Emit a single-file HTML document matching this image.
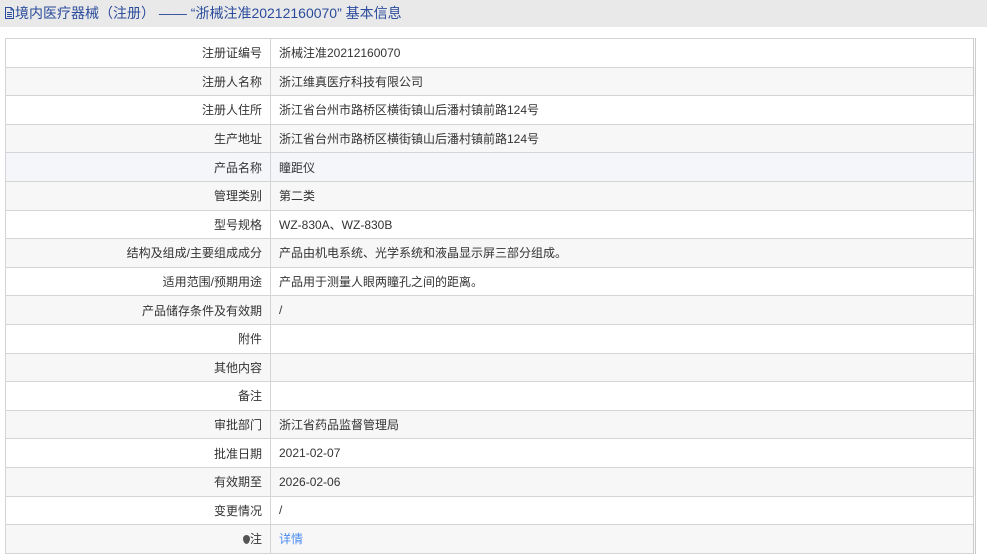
<!DOCTYPE html>
<html><head><meta charset="utf-8"><style>
body{margin:0;background:#fff;font-family:"Liberation Sans","Noto Sans CJK SC",sans-serif;font-size:12px;color:#333;width:987px;height:560px;overflow:hidden}
.hd{height:27px;background:#e9e9e9;color:#2b4c9c;font-size:14px;line-height:27px;padding-left:4px}
table{position:absolute;left:5px;top:38px;width:971px;border-collapse:collapse;border-right:3px double #ccc}
tr{height:28.6px}
td{border:1px solid #d4d4d4;height:28.6px;padding:0 8px;box-sizing:border-box}
td.l{width:265px;text-align:right}
tr:nth-child(even) td{background:#f7f7f7}
tr.h td{background:#f4f6fa}
a{color:#4a8cf0;text-decoration:none}
</style></head><body>
<div class="hd"><svg width="11" height="12" viewBox="0 0 11 12" style="vertical-align:-1px"><path d="M1.5 .5h5.5l2.5 2.5v8.5h-8z M7 .5v2.5h2.5 M3 5.5h5 M3 7.5h5 M3 9.5h5" fill="none" stroke="#2b4c9c"/></svg>境内医疗器械（注册） ——&nbsp;“浙械注准20212160070” 基本信息</div>
<table>
<tr><td class="l">注册证编号</td><td>浙械注准20212160070</td></tr>
<tr><td class="l">注册人名称</td><td>浙江维真医疗科技有限公司</td></tr>
<tr><td class="l">注册人住所</td><td>浙江省台州市路桥区横街镇山后潘村镇前路124号</td></tr>
<tr><td class="l">生产地址</td><td>浙江省台州市路桥区横街镇山后潘村镇前路124号</td></tr>
<tr class="h"><td class="l">产品名称</td><td>瞳距仪</td></tr>
<tr><td class="l">管理类别</td><td>第二类</td></tr>
<tr><td class="l">型号规格</td><td>WZ-830A、WZ-830B</td></tr>
<tr><td class="l">结构及组成/主要组成成分</td><td>产品由机电系统、光学系统和液晶显示屏三部分组成。</td></tr>
<tr><td class="l">适用范围/预期用途</td><td>产品用于测量人眼两瞳孔之间的距离。</td></tr>
<tr><td class="l">产品储存条件及有效期</td><td>/</td></tr>
<tr><td class="l">附件</td><td></td></tr>
<tr><td class="l">其他内容</td><td></td></tr>
<tr><td class="l">备注</td><td></td></tr>
<tr><td class="l">审批部门</td><td>浙江省药品监督管理局</td></tr>
<tr><td class="l">批准日期</td><td>2021-02-07</td></tr>
<tr><td class="l">有效期至</td><td>2026-02-06</td></tr>
<tr><td class="l">变更情况</td><td>/</td></tr>
<tr><td class="l"><span style="display:inline-block;width:7px;height:9px;background:#555;border-radius:50% 50% 50% 50%/40% 40% 60% 60%;vertical-align:-1px"></span>注</td><td><a>详情</a></td></tr>
</table>
</body></html>
